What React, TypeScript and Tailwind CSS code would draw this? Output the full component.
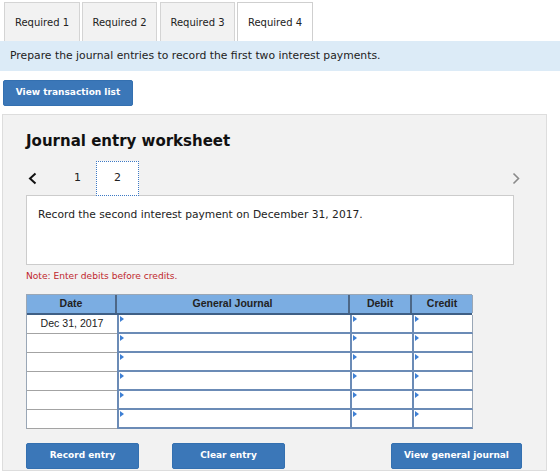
import { ReactNode } from "react";

const FONT = { fontFamily: '"DejaVu Sans", Verdana, sans-serif' };
const ARIAL = { fontFamily: '"Liberation Sans", Arial, sans-serif' };

const TABS = [
  { label: "Required 1", w: "w-[76px]", ml: "ml-0" },
  { label: "Required 2", w: "w-[75px]", ml: "ml-[2px]" },
  { label: "Required 3", w: "w-[75px]", ml: "ml-[3px]" },
  { label: "Required 4", w: "w-[76px]", ml: "ml-[2px]", active: true },
];

function Btn({ children, className }: { children: ReactNode; className: string }) {
  return (
    <button
      className={`h-[26px] rounded-[2px] bg-[#3b77b8] border border-[#3470b0] text-white text-[9px] font-bold flex items-center justify-center ${className}`}
    >
      {children}
    </button>
  );
}

function InputCell({ last }: { last?: boolean }) {
  return (
    <div
      className={`relative bg-white border-l-2 border-b-2 border-[#6b8bb6] ${last ? "border-r border-r-[#9aa7b6]" : ""}`}
    >
      <div className="absolute left-[1px] top-[1px] w-0 h-0 border-y-[3px] border-y-transparent border-l-[4px] border-l-[#3d7fd4]" />
    </div>
  );
}

export default function App() {
  const rows = ["Dec 31, 2017", "", "", "", "", ""];
  return (
    <div className="w-[560px] h-[476px] bg-white overflow-hidden text-[#222]" style={FONT}>
      {/* tabs */}
      <div className="flex pl-[4px] pt-[2px] h-[41px]">
        {TABS.map((t) => (
          <div
            key={t.label}
            className={`${t.w} ${t.ml} h-[39px] border border-b-0 flex items-center justify-center text-[10px] ${
              t.active ? "bg-white border-[#cfcfcf]" : "bg-[#f2f2f2] border-[#d4d4d4]"
            }`}
          >
            {t.label}
          </div>
        ))}
      </div>

      <div className="h-[30px] bg-[#dcebf7] flex items-center pl-[10px] text-[10.8px] text-[#222]">
        Prepare the journal entries to record the first two interest payments.
      </div>

      <div className="pl-[3px] mt-[9px]">
        <Btn className="w-[130px]">View transaction list</Btn>
      </div>

      {/* worksheet panel */}
      <div className="ml-[2px] mt-[8px] w-[545px] h-[357px] bg-[#f2f2f2] border border-[#dddddd] pl-[23px]">
        <h2 className="mt-[17px] text-[15px] leading-[18px] font-bold text-[#111]">Journal entry worksheet</h2>

        <div className="mt-[11px] h-[34px] w-[496px] flex items-start">
          <div className="w-[12px] h-[34px] flex items-center pl-[2px]">
            <svg width="9" height="13" viewBox="0 0 9 13">
              <polyline points="7.5,1.5 2,6.5 7.5,11.5" fill="none" stroke="#111" strokeWidth="2" />
            </svg>
          </div>
          <div className="ml-[36px] w-[22px] h-[34px] flex items-center text-[11px]">1</div>
          <div className="relative z-10 w-[43px] h-[35px] bg-white border border-dotted border-[#3d79c4] flex items-center justify-center text-[11px]">
            2
          </div>
          <div className="ml-auto w-[10px] h-[34px] flex items-center">
            <svg width="8" height="13" viewBox="0 0 8 13">
              <polyline points="1.5,1.5 6.5,6.5 1.5,11.5" fill="none" stroke="#8a8a8a" strokeWidth="1.6" />
            </svg>
          </div>
        </div>

        <div className="w-[488px] h-[70px] bg-white border border-[#cccccc] pl-[11px] pt-[12px] text-[10.7px] leading-[14px]">
          Record the second interest payment on December 31, 2017.
        </div>

        <p className="mt-[5px] text-[9.1px] leading-[12px] text-[#c0272d]">Note: Enter debits before credits.</p>

        {/* table */}
        <div className="mt-[12px] w-[446px] border-t border-l border-[#9aa7b6]" style={ARIAL}>
          <div className="grid grid-cols-[90px_233px_62px_61px] h-[20px] bg-[#7badE2] border-b-2 border-[#3f5f85] text-[10.5px] font-bold text-[#222]">
            <div className="flex items-center justify-center border-r-2 border-[#4d6786]">Date</div>
            <div className="flex items-center justify-center border-r-2 border-[#4d6786]">General Journal</div>
            <div className="flex items-center justify-center border-r-2 border-[#4d6786]">Debit</div>
            <div className="flex items-center justify-center border-r border-[#9aa7b6]">Credit</div>
          </div>
          {rows.map((d, i) => (
            <div key={i} className="grid grid-cols-[90px_233px_62px_61px] h-[19px]">
              <div className="bg-white border-b border-[#a3a3a3] flex items-center justify-center text-[10.6px] text-[#222]">
                {d}
              </div>
              <InputCell />
              <InputCell />
              <InputCell last />
            </div>
          ))}
        </div>

        <div className="mt-[14px] w-[496px] flex">
          <Btn className="w-[113px]">Record entry</Btn>
          <Btn className="w-[113px] ml-[33px]">Clear entry</Btn>
          <Btn className="w-[131px] ml-[106px]">View general journal</Btn>
        </div>
      </div>
    </div>
  );
}
